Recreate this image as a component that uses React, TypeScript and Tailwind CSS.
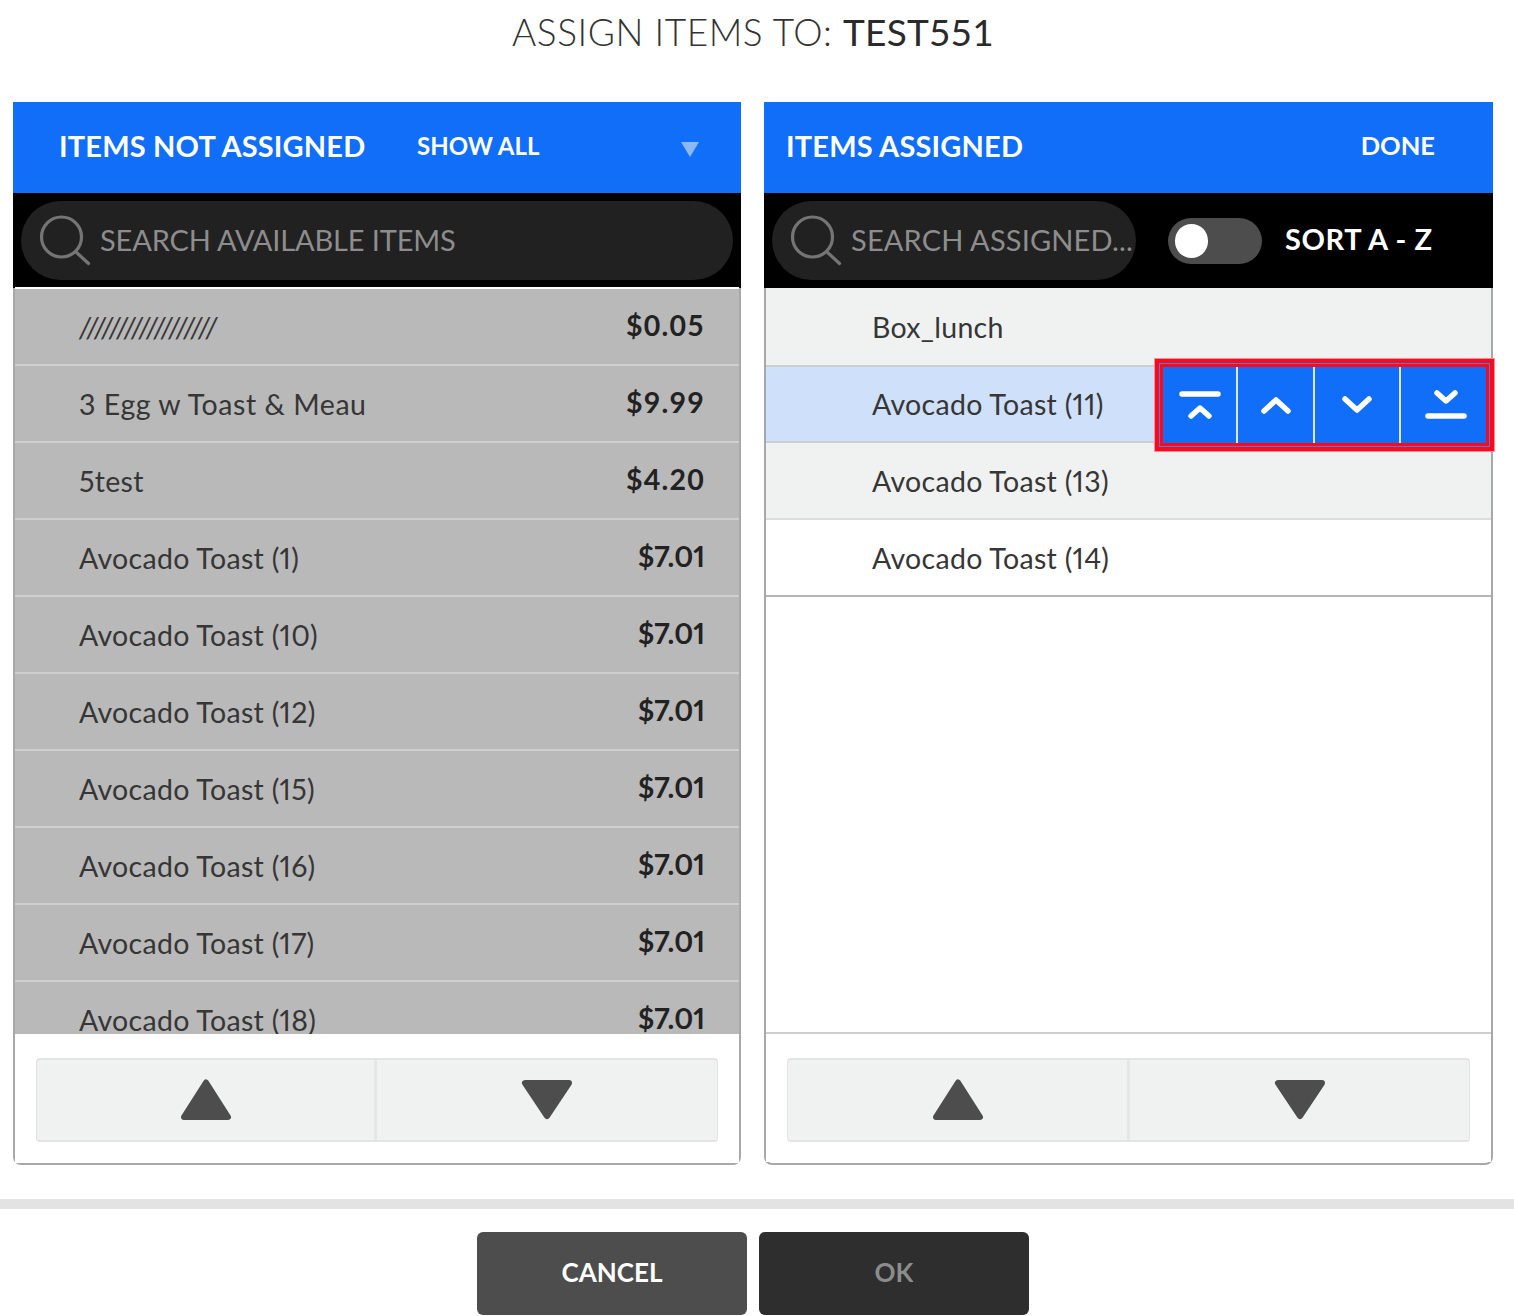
const FONT = "font-['Lato','Liberation_Sans',sans-serif]";

const left: [string, string][] = [
  ["//////////////////", "$0.05"],
  ["3 Egg w Toast & Meau", "$9.99"],
  ["5test", "$4.20"],
  ["Avocado Toast (1)", "$7.01"],
  ["Avocado Toast (10)", "$7.01"],
  ["Avocado Toast (12)", "$7.01"],
  ["Avocado Toast (15)", "$7.01"],
  ["Avocado Toast (16)", "$7.01"],
  ["Avocado Toast (17)", "$7.01"],
  ["Avocado Toast (18)", "$7.01"],
];

function SearchIcon() {
  return (
    <svg width="52" height="52" viewBox="0 0 52 52" fill="none" stroke="#757575" strokeWidth="3.2" strokeLinecap="round" className="shrink-0">
      <circle cx="22.5" cy="23" r="20" />
      <path d="M37 38 L49.5 49.5" />
    </svg>
  );
}

function Pager({ wide }: { wide?: boolean }) {
  return (
    <div className="flex h-[84px] rounded-[4px] border border-[#e3e3e3] border-t-2 border-b-2 bg-[#f0f2f2]">
      <button className={`flex items-center justify-center border-r-[3px] border-[#e6e6e6] ${wide ? "w-[342px]" : "w-[340px]"}`}>
        <svg width="52" height="42" viewBox="0 0 52 42"><path d="M26 3.5 L48 38 L4 38 Z" fill="#4d4d4d" stroke="#4d4d4d" strokeWidth="6" strokeLinejoin="round" /></svg>
      </button>
      <button className="flex flex-1 items-center justify-center">
        <svg width="52" height="42" viewBox="0 0 52 42"><path d="M4 4 L48 4 L26 37 Z" fill="#4d4d4d" stroke="#4d4d4d" strokeWidth="6" strokeLinejoin="round" /></svg>
      </button>
    </div>
  );
}

function MoveControls() {
  return (
    <div className="absolute left-[389px] top-[-8px] h-[92px] w-[339px] border-[4px] border-[#fb0a1e] shadow-[0_0_0_1px_#ff8c98]">
      <div className="h-full border border-[#4a7fe0]">
        <div className="flex h-full border-[3px] border-[#fb0a1e] bg-[#116ef8]">
          <button className="flex w-[75px] items-center justify-center border-r-2 border-[#e0e6ee]">
            <svg width="42" height="30" viewBox="0 0 42 30" fill="none" stroke="#fff" strokeWidth="5.5" strokeLinecap="round" strokeLinejoin="round">
              <path d="M3 4 H39" /><path d="M12 26 L21 18 L30 26" />
            </svg>
          </button>
          <button className="flex w-[77px] items-center justify-center border-r-2 border-[#e0e6ee]">
            <svg width="30" height="20" viewBox="0 0 30 20" fill="none" stroke="#fff" strokeWidth="5.5" strokeLinecap="round" strokeLinejoin="round">
              <path d="M3 16 L15 5 L27 16" />
            </svg>
          </button>
          <button className="flex w-[86px] items-center justify-center border-r-2 border-[#e0e6ee]">
            <svg width="30" height="20" viewBox="0 0 30 20" fill="none" stroke="#fff" strokeWidth="5.5" strokeLinecap="round" strokeLinejoin="round">
              <path d="M3 4 L15 15 L27 4" />
            </svg>
          </button>
          <button className="flex flex-1 items-center justify-center pl-[5px]">
            <svg width="42" height="30" viewBox="0 0 42 30" fill="none" stroke="#fff" strokeWidth="5.5" strokeLinecap="round" strokeLinejoin="round">
              <path d="M12 3 L21 11 L30 3" /><path d="M3 26 H39" />
            </svg>
          </button>
        </div>
      </div>
    </div>
  );
}

const nameText = "text-[28.5px] tracking-[0.3px] text-[#363636] [font-variant-numeric:proportional-nums]";

export default function App() {
  return (
    <div className={`${FONT} relative h-[1316px] w-[1514px] overflow-hidden bg-white`}>
      <h1 className="flex h-[102px] justify-center pr-[8px] pt-[8px] text-[37px] font-light leading-[48px] text-[#333]">
        <span className="tracking-[0.55px]">ASSIGN ITEMS TO:&nbsp;</span><span className="font-normal tracking-[0.2px] text-[#2a2a2a]">TEST551</span>
      </h1>

      <div className="flex gap-[23px] pl-[13px]">
        {/* Left panel */}
        <section className="flex h-[1063px] w-[728px] flex-col rounded-b-[8px] rounded-t-[3px] border-x-2 border-b-2 border-[#a8a8a8]">
          <header className="mx-[-2px] flex h-[91px] shrink-0 items-center bg-[#116ef8] pb-1 pl-[46px] text-white">
            <span className="w-[358px] text-[29px] font-bold tracking-[0.17px]">ITEMS NOT ASSIGNED</span>
            <span className="text-[24px] font-bold">SHOW ALL</span>
            <svg width="18" height="15" viewBox="0 0 18 15" className="ml-[142px] mt-2"><path d="M0 0 H18 L9 15 Z" fill="#8db8f8" /></svg>
          </header>
          <div className="mx-[-2px] flex h-[95px] shrink-0 items-start bg-black px-2 pt-2">
            <div className="flex h-[79px] flex-1 items-center gap-[9px] rounded-full bg-[#212121] pb-[2px] pl-[18px] text-[29px] tracking-[-0.15px] text-[#8d8d8d]">
              <SearchIcon />
              <span>SEARCH AVAILABLE ITEMS</span>
            </div>
          </div>
          <div className="mt-[-1px] min-h-0 flex-1 overflow-hidden border-t-2 border-white bg-[#b9b9b9]">
            {left.map(([name, price], i) => (
              <div key={i} className="flex h-[77px] items-center justify-between border-b-2 border-[#cfcfcf] pl-[64px] pr-[34px]">
                <span className={`pt-[1px] ${nameText} ${i === 0 ? "italic tracking-[1.2px]" : ""} ${i === 1 ? "tracking-[0.55px]" : ""}`}>{name}</span>
                <span className={`mt-[-3px] text-[28.5px] font-bold text-[#222] ${i < 3 ? "tracking-[1.2px]" : "[font-variant-numeric:proportional-nums]"}`}>{price}</span>
              </div>
            ))}
          </div>
          <div className="h-[129px] shrink-0 bg-white px-[21px] pt-[24px]">
            <Pager />
          </div>
        </section>

        {/* Right panel */}
        <section className="flex h-[1063px] w-[729px] flex-col rounded-b-[8px] rounded-t-[3px] border-x-2 border-b-2 border-[#a8a8a8]">
          <header className="mx-[-2px] flex h-[91px] shrink-0 items-center justify-between bg-[#116ef8] pb-1 pl-[22px] pr-[58px] text-white">
            <span className="text-[29px] font-bold tracking-[0.17px]">ITEMS ASSIGNED</span>
            <span className="text-[25.5px] font-bold">DONE</span>
          </header>
          <div className="mx-[-2px] flex h-[95px] shrink-0 items-start bg-black pl-2 pt-2">
            <div className="flex h-[79px] w-[364px] items-center gap-[9px] rounded-full bg-[#212121] pb-[2px] pl-[18px] text-[29px] tracking-[0.15px] text-[#8d8d8d]">
              <SearchIcon />
              <span className="whitespace-nowrap">SEARCH ASSIGNED...</span>
            </div>
            <div className="ml-[32px] mt-[17px] flex h-[46px] w-[94px] items-center rounded-full bg-[#4d4d4d] pl-[7px]">
              <div className="h-[34px] w-[33px] rounded-full bg-white" />
            </div>
            <span className="ml-[23px] mt-[18px] text-[29px] font-bold leading-[40px] tracking-[0.6px] text-white">SORT A - Z</span>
          </div>
          <div className="flex h-[746px] shrink-0 flex-col border-b-2 border-[#cfcfcf] bg-white">
            <div className={`flex h-[79px] items-center border-b-2 border-[#cfcfcf] bg-[#f0f2f2] pl-[106px] pt-[2px] ${nameText}`}>Box_lunch</div>
            <div className={`relative flex h-[76px] items-center border-b-2 border-[#cfcfcf] bg-[#cfe0fb] pl-[106px] ${nameText}`}>
              Avocado Toast (11)
              <MoveControls />
            </div>
            <div className={`flex h-[77px] items-center border-b-2 border-[#dcdcdc] bg-[#f0f2f2] pl-[106px] pt-[2px] ${nameText}`}>Avocado Toast (13)</div>
            <div className={`flex h-[77px] items-center border-b-2 border-[#b5b5b5] bg-white pl-[106px] pt-[2px] ${nameText}`}>Avocado Toast (14)</div>
          </div>
          <div className="h-[128px] shrink-0 bg-white px-[21px] pt-[24px]">
            <Pager wide />
          </div>
        </section>
      </div>

      <div className="mt-[34px] h-[10px] bg-[#e3e3e3]" />

      <div className="mt-[23px] flex justify-center gap-3 pr-[8px]">
        <button className="h-[83px] w-[270px] rounded-[6px] bg-[#4d4d4d] pb-[2px] text-[26px] font-bold text-white">CANCEL</button>
        <button className="h-[83px] w-[270px] rounded-[6px] bg-[#2e2e2e] pb-[2px] text-[26px] font-bold text-[#8c8c8c]">OK</button>
      </div>
    </div>
  );
}
